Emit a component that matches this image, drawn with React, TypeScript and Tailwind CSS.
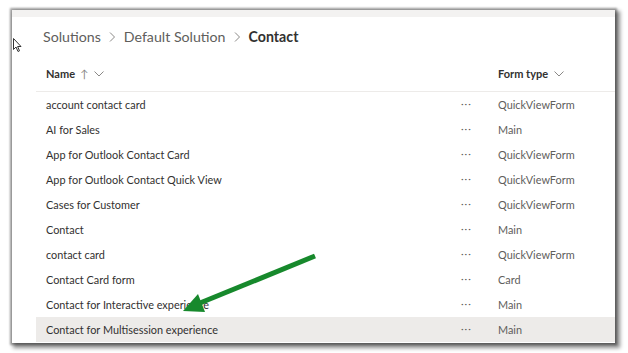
const rows = [
  { name: "account contact card", type: "QuickViewForm" },
  { name: "AI for Sales", type: "Main" },
  { name: "App for Outlook Contact Card", type: "QuickViewForm" },
  { name: "App for Outlook Contact Quick View", type: "QuickViewForm" },
  { name: "Cases for Customer", type: "QuickViewForm" },
  { name: "Contact", type: "Main" },
  { name: "contact card", type: "QuickViewForm" },
  { name: "Contact Card form", type: "Card" },
  { name: "Contact for Interactive experience", type: "Main" },
  { name: "Contact for Multisession experience", type: "Main", selected: true },
];

const Chevron = () => (
  <svg width="10" height="6" viewBox="0 0 10 6" className="ml-[6px]">
    <path d="M0.5 0.5 L5 5 L9.5 0.5" fill="none" stroke="#8a8886" strokeWidth="1" />
  </svg>
);

const App = () => {
  return (
    <div className="relative w-[628px] h-[353px] bg-white overflow-hidden font-['Lato',sans-serif]">
      {/* Window with screenshot shadow */}
      <div className="absolute left-[12px] top-[10px] w-[603px] h-[333px] bg-white flex flex-col shadow-[0_0_2px_2px_rgba(0,0,0,0.35),3px_3px_4px_2px_rgba(0,0,0,0.45)]">
        <div className="h-[7px] bg-[#f3f2f1]"></div>

        {/* Breadcrumb */}
        <div className="h-[40px] flex items-center pl-[31px] text-[14.2px] text-[#605e5c]">
          <span>Solutions</span>
          <svg width="7" height="10" viewBox="0 0 7 10" className="mx-[8px]">
            <path d="M1 0.5 L5.5 5 L1 9.5" fill="none" stroke="#8a8886" strokeWidth="1" />
          </svg>
          <span>Default Solution</span>
          <svg width="7" height="10" viewBox="0 0 7 10" className="mx-[8px]">
            <path d="M1 0.5 L5.5 5 L1 9.5" fill="none" stroke="#8a8886" strokeWidth="1" />
          </svg>
          <span className="font-bold text-[#323130]">Contact</span>
        </div>

        {/* Table */}
        <div className="ml-[24px] flex flex-col">
          <div className="h-[35px] flex items-center border-b border-[#edebe9] text-[11px] font-bold text-[#323130]">
            <div className="w-[425px] pl-[10px] flex items-center">
              <span>Name</span>
              <span className="ml-[5px] font-normal text-[#8a8886] text-[11px]">↑</span>
              <Chevron />
            </div>
            <div className="w-[37px]"></div>
            <div className="flex items-center">
              <span>Form type</span>
              <Chevron />
            </div>
          </div>
          {rows.map((row) => (
            <div
              key={row.name}
              className={`h-[25px] pt-[2px] flex items-center text-[10.9px] ${row.selected ? "bg-[#edebe9]" : ""}`}
            >
              <div className="w-[425px] pl-[10px] text-[#323130]">{row.name}</div>
              <div className="w-[37px] text-[#605e5c] tracking-[1px] text-[10px] -mt-[4px]">···</div>
              <div className="text-[#605e5c]">{row.type}</div>
            </div>
          ))}
        </div>
      </div>

      {/* Mouse cursor */}
      <svg className="absolute left-[13px] top-[38px]" width="10" height="15" viewBox="0 0 10 15">
        <path d="M0.5 0.5 L0.5 11.5 L3 9 L5 13.5 L6.5 12.8 L4.6 8.5 L8 8.5 Z" fill="white" stroke="#333" strokeWidth="1" />
      </svg>

      {/* Green callout arrow */}
      <svg className="absolute left-0 top-0" width="628" height="353" viewBox="0 0 628 353">
        <line x1="315" y1="256" x2="200" y2="303" stroke="#17892c" strokeWidth="5" />
        <polygon points="183,311 205,312 198,294" fill="#17892c" />
      </svg>
    </div>
  );
};

export default App;
